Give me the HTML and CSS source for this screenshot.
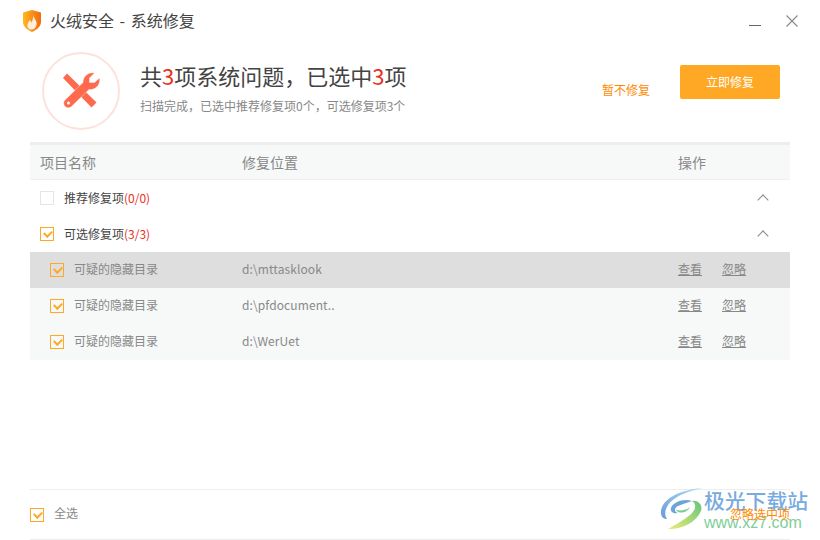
FILE: index.html
```html
<!DOCTYPE html>
<html lang="zh-CN">

<head>
    <meta charset="UTF-8">
    <title>火绒安全 - 系统修复</title>
    <link rel="stylesheet" href="styles.css">
</head>

<body>
    <div class="app">
        <div class="titlebar">
            <svg class="logo" viewBox="0 0 18 22">
                <defs>
                    <linearGradient id="shield" x1="0" y1="0" x2="1" y2="0">
                        <stop offset="0" stop-color="#ffb81c" />
                        <stop offset="1" stop-color="#f26a12" />
                    </linearGradient>
                </defs>
                <path d="M9 0L18 2.5V12C18 17 13 20 9 22C5 20 0 17 0 12V2.5Z" fill="url(#shield)" />
                <path d="M10 5C11 9 14.5 11 13.5 15C12.8 18 10.5 19.5 8.5 19.5C6 19.5 4 17.5 4.5 14.5C4.8 12.5 6.3 11.5 6.8 10C7.8 11 8 12 8 13C9.5 11 10.5 8 10 5Z" fill="#ffeedd" />
            </svg>
            <span class="title">火绒安全 - 系统修复</span>
            <div class="winbtns">
                <span class="min"></span>
                <svg class="close" viewBox="0 0 12 12">
                    <path d="M.5 .5L11.5 11.5M11.5 .5L.5 11.5" stroke="#888" stroke-width="1.1" fill="none" />
                </svg>
            </div>
        </div>

        <div class="summary">
            <div class="circle">
                <svg class="tools" viewBox="0 0 40 40">
                    <path d="M2 7L6 2.5L35.5 31.5L30.5 36.5Z" fill="#ff6a4f" />
                    <path d="M33.5 2A9.5 9.5 0 0 0 22 11.5L4 29A4.2 4.2 0 0 0 10.5 35.5L28 18.5A9.5 9.5 0 0 0 38.5 7L33.5 11.5H28.5V7Z" fill="#ff6a4f" stroke="#fff" stroke-width=".4" />
                    <circle cx="7.5" cy="32" r="1.5" fill="#fff" />
                </svg>
            </div>
            <div class="info">
                <h1>共<em>3</em>项系统问题&#65292;已选中<em>3</em>项</h1>
                <p>扫描完成&#65292;已选中推荐修复项0个&#65292;可选修复项3个</p>
            </div>
            <a class="later">暂不修复</a>
            <a class="fix">立即修复</a>
        </div>

        <div class="list">
            <div class="row head">
                <span>项目名称</span>
                <span>修复位置</span>
                <span>操作</span>
            </div>
            <div class="group">
                <i class="check off"></i>
                <span>推荐修复项<em>(0/0)</em></span>
                <i class="arrow"></i>
            </div>
            <div class="group">
                <i class="check"></i>
                <span>可选修复项<em>(3/3)</em></span>
                <i class="arrow"></i>
            </div>
            <div class="row item active">
                <span class="name"><i class="check"></i><span>可疑的隐藏目录</span></span>
                <span class="path">d:\mttasklook</span>
                <span class="ops"><a>查看</a><a>忽略</a></span>
            </div>
            <div class="row item">
                <span class="name"><i class="check"></i><span>可疑的隐藏目录</span></span>
                <span class="path">d:\pfdocument..</span>
                <span class="ops"><a>查看</a><a>忽略</a></span>
            </div>
            <div class="row item">
                <span class="name"><i class="check"></i><span>可疑的隐藏目录</span></span>
                <span class="path">d:\WerUet</span>
                <span class="ops"><a>查看</a><a>忽略</a></span>
            </div>
        </div>

        <div class="footer">
            <span class="all"><i class="check"></i><span>全选</span></span>
            <a class="ignore">忽略选中项</a>
        </div>

        <!-- 水印 -->
        <div class="mark">
            <svg class="swirl" viewBox="0 0 44 44">
                <defs>
                    <linearGradient id="sw1" x1="0" y1="1" x2="1" y2="0">
                        <stop offset="0" stop-color="#5a8fd8" />
                        <stop offset="1" stop-color="#a8dcf0" />
                    </linearGradient>
                    <linearGradient id="sw2" x1="0" y1="1" x2="1" y2="0">
                        <stop offset="0" stop-color="#f0e96a" />
                        <stop offset="1" stop-color="#4fc06c" />
                    </linearGradient>
                </defs>
                <path d="M43 1C28 2 10 7 3 18C-1 25 1 32 7 32C3 26 6 18 14 12C22 6 34 3 43 1Z" fill="url(#sw1)" />
                <path d="M32 14C24 11 13 15 11 21C10 25 14 27 18 26C14 25 14 21 18 19C22 17 27 16 32 14Z" fill="#5a9bd8" />
                <path d="M8 42C20 43 36 36 41 24C43 18 38 13 32 14C37 17 36 23 30 28C24 33 15 38 8 42Z" fill="url(#sw2)" />
                <path d="M16 23C20 28 28 25 30 20C27 23 22 24 16 23Z" fill="#6cc58a" />
            </svg>
            <div class="brand">
                <b>极光下载站</b>
                <span>www.xz7.com</span>
            </div>
        </div>
    </div>
</body>

</html>
```

FILE: styles.css
```css
* {
    box-sizing: border-box;
}

body {
    margin: 0;
    background: #fff;
    font-family: "Noto Sans CJK SC", "Noto Sans", sans-serif;
    font-size: 12px;
    color: #888;
}

em {
    font-style: normal;
    color: #e8301c;
}

i {
    font-style: normal;
}

.app {
    position: relative;
    display: flex;
    flex-direction: column;
    width: 820px;
    height: 540px;
    overflow: hidden;
}

.titlebar {
    display: flex;
    align-items: center;
    flex: none;
    height: 42px;
    padding-left: 23px;
}

.logo {
    width: 18px;
    height: 22px;
    margin-right: 9px;
}

.title {
    margin-bottom: 2px;
    font-size: 16px;
    word-spacing: 2px;
    color: #444;
}

.winbtns {
    display: flex;
    align-items: flex-start;
    margin-left: auto;
    padding-right: 22px;
}

.min {
    width: 12px;
    height: 1px;
    margin-top: 10px;
    background: #666;
}

.close {
    width: 12px;
    height: 12px;
    margin-left: 25px;
}

.summary {
    display: flex;
    flex: none;
    height: 100px;
    padding: 10px 40px 0 42px;
}

.circle {
    display: flex;
    align-items: center;
    justify-content: center;
    width: 78px;
    height: 78px;
    border: 2px solid #fde2dc;
    border-radius: 50%;
}

.tools {
    width: 40px;
    height: 40px;
}

.info {
    margin-left: 20px;
}

.info h1 {
    margin: 6px 0 0;
    font-size: 22px;
    font-weight: 400;
    line-height: 34px;
    color: #444;
}

.info p {
    margin: 5px 0 0;
    line-height: 18px;
    color: #888;
}

.later {
    margin: 29px 0 0 auto;
    line-height: 18px;
    color: #ff8a00;
}

.fix {
    width: 100px;
    height: 34px;
    margin: 13px 0 0 30px;
    border-radius: 2px;
    background: #ffa826;
    color: #fff;
    font-size: 12px;
    line-height: 33px;
    text-align: center;
}

.list {
    flex: 1;
    margin: 0 30px;
    border-top: 3px solid #eee;
}

.row {
    display: grid;
    grid-template-columns: 212px 436px 1fr;
    align-items: center;
    height: 36px;
    background: #f7f9f9;
}

.head {
    height: 35px;
    padding-left: 10px;
    grid-template-columns: 202px 436px 1fr;
    border-bottom: 1px solid #f0f0f0;
    font-size: 14px;
}

.head span {
    margin-bottom: 1px;
}

.group {
    display: flex;
    align-items: center;
    height: 36px;
    padding: 0 23px 0 10px;
    color: #444;
}

.group span {
    margin-bottom: 2px;
}

.group .check {
    margin-right: 10px;
}

.arrow {
    width: 8px;
    height: 8px;
    margin: 4px 0 0 auto;
    border-top: 1px solid #888;
    border-left: 1px solid #888;
    transform: rotate(45deg);
}

.check {
    position: relative;
    display: block;
    flex: none;
    width: 14px;
    height: 14px;
    border: 1px solid #ffa826;
}

.check::after {
    content: "";
    position: absolute;
    left: 3px;
    top: 2px;
    width: 6px;
    height: 4px;
    border-left: 2px solid #ffa826;
    border-bottom: 2px solid #ffa826;
    transform: rotate(-45deg);
}

.check.off {
    border-color: #e5e5e5;
}

.check.off::after {
    display: none;
}

.item.active {
    background: #dedede;
}

.name {
    display: flex;
    align-items: center;
    padding-left: 20px;
}

.name .check {
    margin-right: 10px;
}

.name span,
.path,
.ops {
    margin-bottom: 4px;
}

.path {
    letter-spacing: .1px;
}

.ops {
    display: flex;
    gap: 20px;
}

.ops a {
    text-decoration: underline;
}

.footer {
    display: flex;
    align-items: center;
    justify-content: space-between;
    flex: none;
    height: 51px;
    margin: 0 30px;
    border-top: 1px solid #eee;
    border-bottom: 1px solid #eee;
}

.all {
    display: flex;
    align-items: center;
}

.all .check {
    margin-right: 10px;
}

.all span {
    margin-bottom: 4px;
}

.ignore {
    position: relative;
    z-index: 2;
    margin-bottom: 2px;
    color: #ff8a00;
}

.mark {
    position: absolute;
    left: 660px;
    top: 487px;
    display: flex;
    opacity: .9;
}

.swirl {
    width: 44px;
    height: 44px;
}

.brand {
    display: flex;
    flex-direction: column;
}

.brand b {
    font-size: 20.8px;
    font-weight: 500;
    line-height: 26px;
    color: #6aa3dc;
}

.brand span {
    margin-top: 2px;
    font-family: "Liberation Sans", sans-serif;
    font-size: 16px;
    line-height: 16px;
    color: #72c98f;
}
```
